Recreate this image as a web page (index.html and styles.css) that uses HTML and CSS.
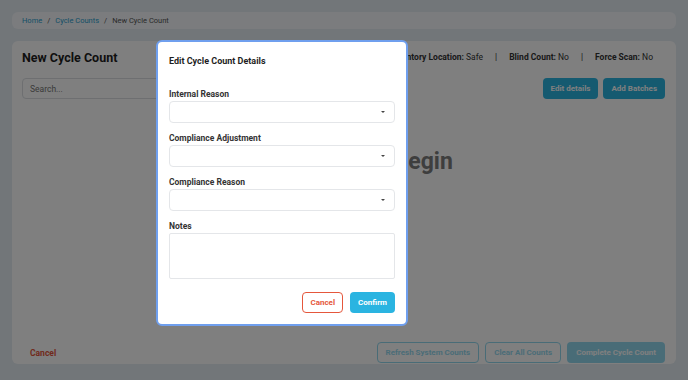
FILE: index.html
```html
<!DOCTYPE html>
<html lang="en">
<head>
  <meta charset="UTF-8">
  <meta name="viewport" content="width=device-width, initial-scale=1.0">
  <title>New Cycle Count</title>
  <link rel="stylesheet" href="styles.css">
</head>
<body>
  <div class="crumbs">
    <a href="#">Home</a>
    <span class="sep">/</span>
    <a href="#">Cycle Counts</a>
    <span class="sep">/</span>
    <span>New Cycle Count</span>
  </div>
  <div class="panel">
    <div class="panel-head">
      <h1>New Cycle Count</h1>
      <div class="meta">
        <span><b>Inventory Location:</b> Safe</span>
        <span class="sep">|</span>
        <span><b>Blind Count:</b> No</span>
        <span class="sep">|</span>
        <span><b>Force Scan:</b> No</span>
      </div>
    </div>
    <div class="toolbar">
      <input class="search" type="text" placeholder="Search...">
      <div class="actions">
        <button class="btn primary">Edit details</button>
        <button class="btn primary">Add Batches</button>
      </div>
    </div>
    <div class="empty">Add batches to begin</div>
    <div class="panel-foot">
      <a href="#" class="link-cancel">Cancel</a>
      <div class="actions">
        <button class="btn outline" disabled>Refresh System Counts</button>
        <button class="btn outline" disabled>Clear All Counts</button>
        <button class="btn primary" disabled>Complete Cycle Count</button>
      </div>
    </div>
  </div>

  <div class="overlay"></div>
  <div class="modal">
    <h2>Edit Cycle Count Details</h2>
    <label>Internal Reason</label>
    <div class="select"><span class="caret"></span></div>
    <label>Compliance Adjustment</label>
    <div class="select"><span class="caret"></span></div>
    <label>Compliance Reason</label>
    <div class="select"><span class="caret"></span></div>
    <label>Notes</label>
    <div class="notes"></div>
    <div class="modal-foot">
      <button class="btn danger">Cancel</button>
      <button class="btn primary">Confirm</button>
    </div>
  </div>
</body>
</html>
```

FILE: styles.css
```css
body {
  margin: 0;
  padding: 12px;
  font-family: Roboto, "Liberation Sans", sans-serif;
  background: #e5ecf3;
  color: #222;
  height: 380px;
  box-sizing: border-box;
  overflow: hidden;
}
.crumbs {
  background: #f6f9fc;
  border-radius: 6px;
  height: 17px;
  padding: 0 10px;
  display: flex;
  align-items: center;
  gap: 5px;
  font-size: 7.5px;
  color: #555;
}
.crumbs a {
  color: #2a9fd0;
  text-decoration: none;
}
.panel {
  margin-top: 12px;
  background: #fff;
  border-radius: 6px;
  height: 323px;
  padding: 0 11px 0 10px;
  display: flex;
  flex-direction: column;
}
.panel-head {
  display: flex;
  justify-content: space-between;
  align-items: center;
  height: 32px;
}
.panel-head h1 {
  margin: 0;
  font-size: 12.5px;
  font-weight: 700;
  color: #1e1e1e;
}
.meta {
  display: flex;
  gap: 12px;
  font-size: 8.5px;
  color: #333;
  padding-right: 12px;
}
.meta b {
  font-weight: 700;
}
.toolbar {
  margin-top: 5px;
  display: flex;
  justify-content: space-between;
}
.search {
  width: 220px;
  height: 21px;
  box-sizing: border-box;
  border: 1px solid #dcdfe3;
  border-radius: 4px;
  padding: 0 7px;
  font-family: inherit;
  font-size: 8.5px;
}
.actions {
  display: flex;
  gap: 5px;
}
.toolbar .btn {
  padding: 0 7px;
}
.btn {
  height: 21px;
  padding: 0 8px;
  border-radius: 4px;
  font-family: inherit;
  font-size: 8px;
  font-weight: 700;
  border: 1px solid transparent;
  cursor: pointer;
}
.btn:disabled {
  opacity: 0.5;
  cursor: default;
}
.primary {
  background: #2ab4e1;
  color: #fff;
}
.outline {
  background: #fff;
  border-color: #2ab4e1;
  color: #2ab4e1;
}
.danger {
  background: #fff;
  border-color: #e5573c;
  color: #e5573c;
}
.empty {
  margin-top: 49px;
  text-align: center;
  font-size: 23px;
  font-weight: 700;
  color: #7c7c7c;
}
.panel-foot {
  margin-top: auto;
  margin-bottom: 1px;
  display: flex;
  justify-content: space-between;
  align-items: center;
}
.link-cancel {
  margin-left: 8px;
  color: #e2553a;
  font-size: 8.5px;
  font-weight: 700;
  text-decoration: none;
}
.panel-foot .actions {
  gap: 6px;
}
.overlay {
  position: fixed;
  inset: 0;
  background: rgba(0, 0, 0, 0.5);
}
.modal {
  position: absolute;
  left: 156px;
  top: 40px;
  width: 252px;
  height: 286px;
  box-sizing: border-box;
  background: #fff;
  border: 2px solid #6f9fee;
  border-radius: 6px;
  padding: 12px 11px 0 11px;
  display: flex;
  flex-direction: column;
}
.modal h2 {
  margin: 0 0 21px;
  font-size: 9px;
  font-weight: 700;
  color: #1e1e1e;
  line-height: 14px;
}
.modal label {
  font-size: 8.5px;
  font-weight: 700;
  color: #333;
  line-height: 10px;
  margin-bottom: 2px;
}
.select {
  height: 22px;
  box-sizing: border-box;
  border: 1px solid #e4e6e9;
  border-radius: 4px;
  margin-bottom: 10px;
  position: relative;
}
.caret {
  position: absolute;
  right: 9px;
  top: 9px;
  width: 0;
  height: 0;
  border-left: 2px solid transparent;
  border-right: 2px solid transparent;
  border-top: 2px solid #444;
}
.notes {
  height: 46px;
  box-sizing: border-box;
  border: 1px solid #e4e6e9;
  border-radius: 2px;
}
.modal-foot {
  margin-top: 13px;
  display: flex;
  justify-content: flex-end;
  gap: 7px;
}
.modal-foot .btn {
  padding: 0 7px;
}
```
